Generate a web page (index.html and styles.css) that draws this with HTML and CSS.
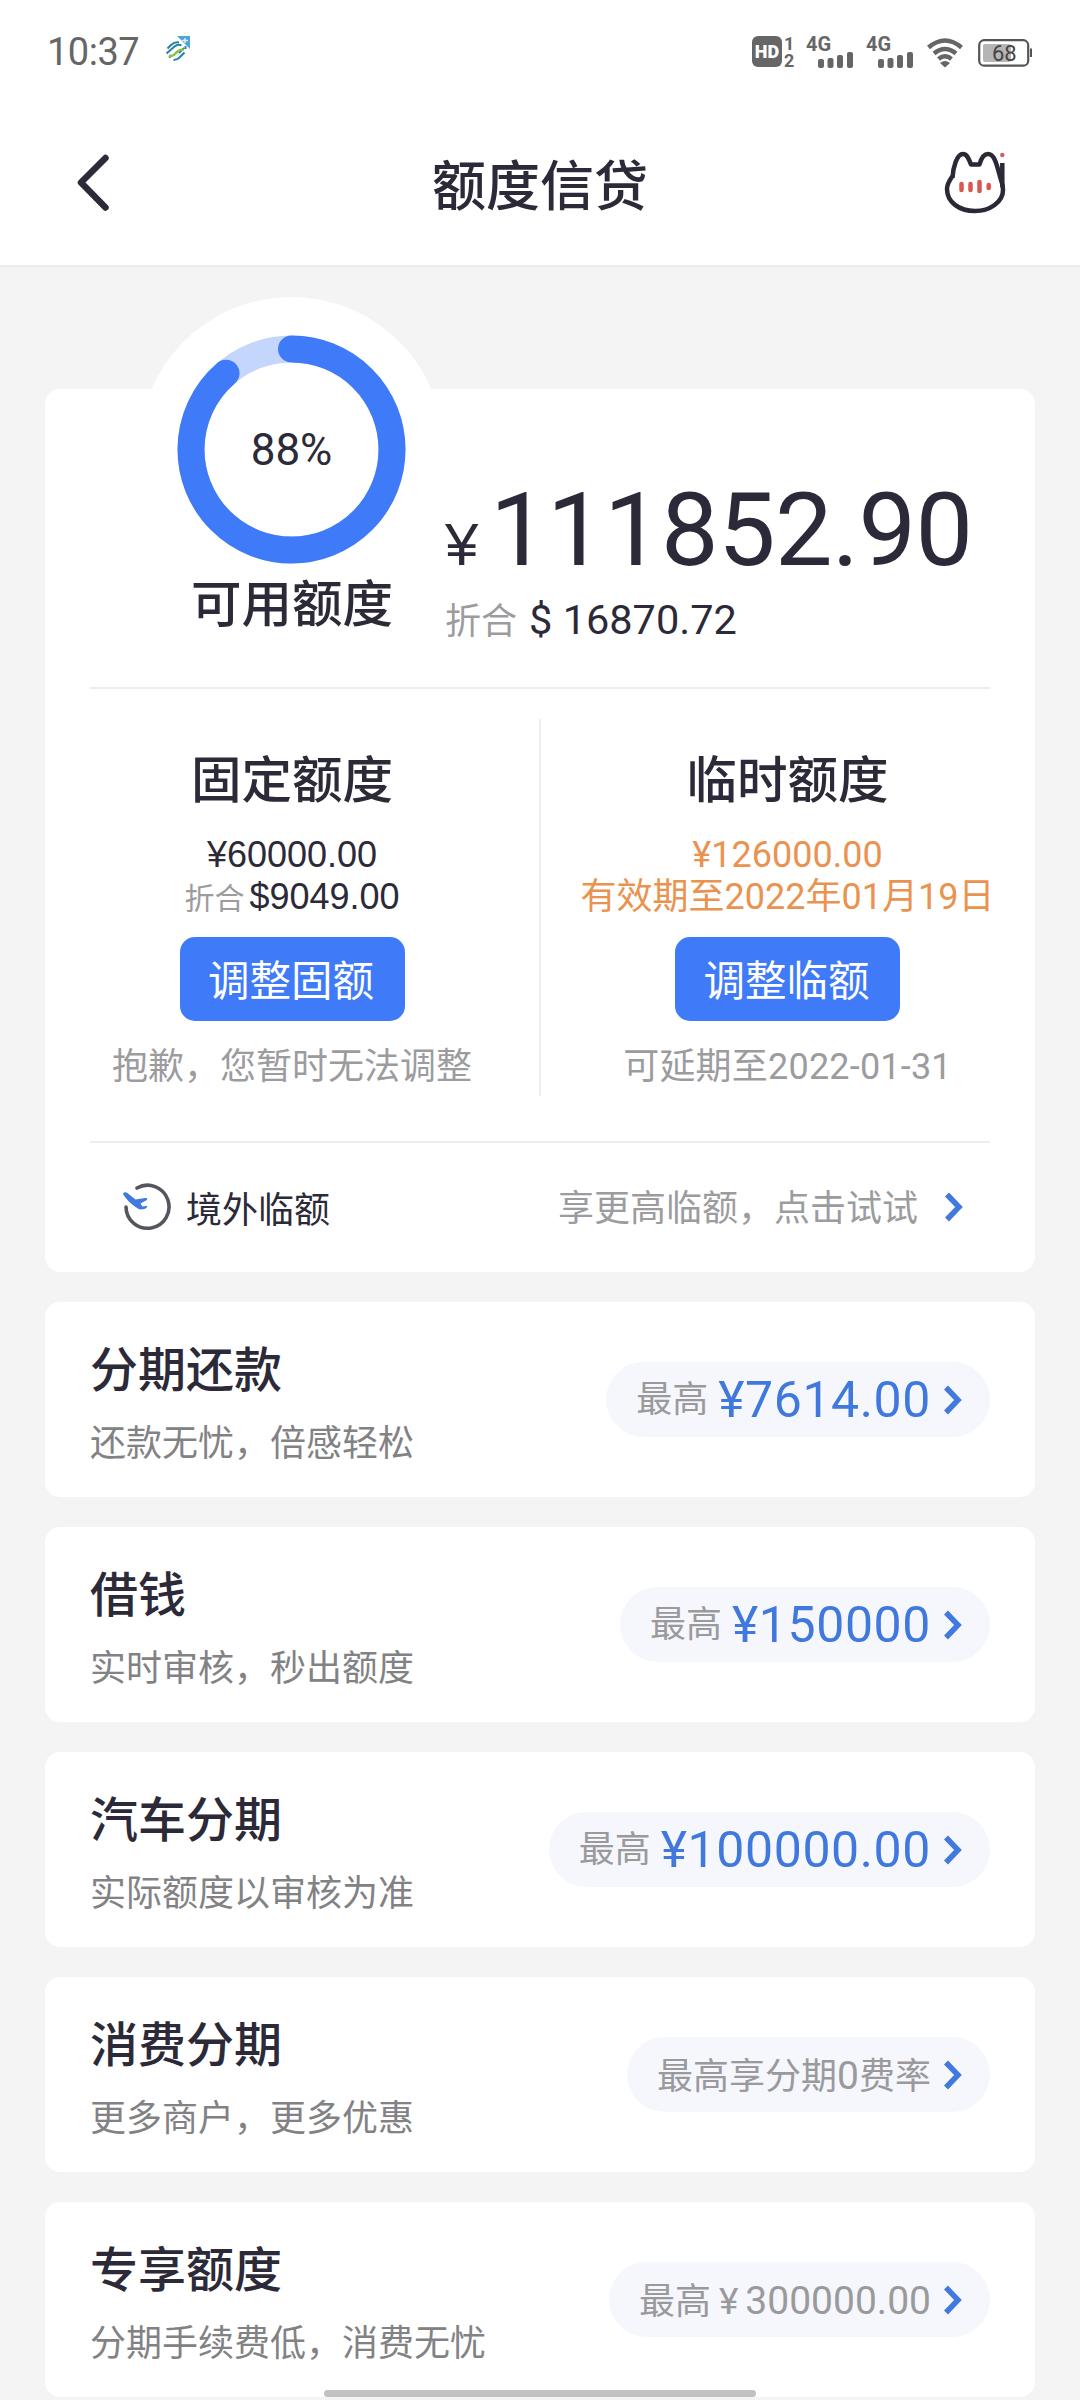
FILE: index.html
```html
<!DOCTYPE html>
<html lang="zh-CN">
<head>
<meta charset="utf-8">
<title>额度信贷</title>
<link rel="stylesheet" href="styles.css">
</head>
<body>
<header class="top">
  <div class="status">
    <span class="time">10:37</span>
    <svg class="app" width="26" height="26" viewBox="0 0 26 26">
      <path class="app-corner" d="M12 0H25V13Z"/>
      <path class="app-plus" d="M17 4.500h6M20 2v5"/>
      <g class="app-logo"><path d="M2.500 12.500 6 9q4-3.500 8-2.500M1.500 17.500l8-7q3.500-3 7-1M4 21.500l3-2M14 17l5-5M8.500 24q3.500 0 6-2.500l5-5M20.500 10v3"/><path class="green" d="M4 19.500q4 1.500 6.500-2t8-4"/></g>
    </svg>
    <span class="grow"></span>
    <span class="hd"><b>HD</b><span class="sims"><i>1</i><i>2</i></span></span>
    <span class="cell c1"><b>4G</b>
      <svg width="36" height="16" viewBox="0 0 36 16"><rect y="7" width="6" height="9" rx="2"/><rect x="9.500" y="6" width="6" height="10" rx="2"/><rect x="19" y="3" width="6" height="13" rx="2"/><rect x="29" width="6" height="16" rx="2"/></svg>
    </span>
    <span class="cell c2"><b>4G</b>
      <svg width="36" height="16" viewBox="0 0 36 16"><rect y="7" width="6" height="9" rx="2"/><rect x="9.500" y="6" width="6" height="10" rx="2"/><rect x="19" y="3" width="6" height="13" rx="2"/><rect x="29" width="6" height="16" rx="2"/></svg>
    </span>
    <svg class="wifi" width="36" height="30" viewBox="0 0 36 30">
      <path d="M1.500 9.500Q18-4.500 34.500 9.500M7 15.500Q18 6.500 29 15.500M11.500 21Q18 15.500 24.500 21"/><path class="dot" d="M13 25Q18 21 23 25L18 29.500Z"/>
    </svg>
    <svg class="battery" width="56" height="28" viewBox="0 0 56 28">
      <rect class="charge" x="5" y="5" width="28" height="18" rx="2"/>
      <rect class="shell" x="1.200" y="1.200" width="49" height="25.500" rx="5"/>
      <path class="nub" d="M53 9.500v8.500"/>
      <text x="14" y="22">68</text>
    </svg>
  </div>
  <nav class="bar">
    <svg class="back" width="36" height="60" viewBox="0 0 36 60"><path d="M31.500 5 7 29.500 31.500 54.500"/></svg>
    <h1>额度信贷</h1>
    <svg class="cat" width="70" height="70" viewBox="940 148 70 70">
      <path d="M952.500 178C953 167 957 154 963 154C967 154 969 159 971 164.500H979.500C981 159 984 154 988 154C995 154 997 166 1001 180C1003 185 1003 188 1003 190C1003 202 990 211 975 211C959 211 947 202 947 189C947 185 949 181 952.500 176"/>
      <path d="M1002.300 163V187"/><circle cx="1002.300" cy="155" r="2.200"/>
      <g class="cheek"><path d="M961.500 184v6M970.500 184v6M979.500 182v9M988.700 185v3"/></g>
    </svg>
  </nav>
</header>
<main>
  <section class="card limit">
    <div class="hero">
      <div class="usage">
        <svg class="ring" width="305" height="305" viewBox="0 0 305 305">
          <circle class="disc" cx="152.500" cy="152.500" r="152.500"/>
          <circle class="track" cx="152.500" cy="152.500" r="100.500"/>
          <circle class="value" cx="152.500" cy="152.500" r="100.500" pathLength="100" stroke-dasharray="88.700 100" transform="rotate(-90 152.500 152.500)"/>
          <text x="152.500" y="167.500" text-anchor="middle">88%</text>
        </svg>
        <h2>可用额度</h2>
      </div>
      <div class="total">
        <div class="sum"><span class="yen">¥</span><span class="big">111852.90</span></div>
        <div class="usd"><span class="muted">折合</span><span>$ 16870.72</span></div>
      </div>
    </div>
    <div class="split">
      <div class="col">
        <h2>固定额度</h2>
        <p class="line">¥60000.00</p>
        <p class="line"><span class="muted small">折合</span>$9049.00</p>
        <button>调整固额</button>
        <p class="line hint">抱歉，您暂时无法调整</p>
      </div>
      <div class="rule"></div>
      <div class="col">
        <h2>临时额度</h2>
        <p class="line orange">¥126000.00</p>
        <p class="line orange">有效期至2022年01月19日</p>
        <button>调整临额</button>
        <p class="line hint date">可延期至2022-01-31</p>
      </div>
    </div>
    <div class="abroad">
      <svg width="50" height="50" viewBox="122 1182 50 50">
        <path class="orbit" d="M137 1188A21.500 21.500 0 1 1 126 1207"/>
        <path class="plane" d="M123.300 1194.500C122.500 1192 126 1191.500 128 1193.500L135.500 1199.500L145 1198C147.500 1197.800 148 1199.500 146 1200.500L140.500 1203.500L142.500 1206.500L146 1206C148.500 1206 147 1208.500 144 1209L140 1209.500C136 1208 128 1202 123.300 1194.500Z"/>
      </svg>
      <span class="name">境外临额</span>
      <span class="grow"></span>
      <span class="tip">享更高临额，点击试试</span>
      <svg class="chev" width="20" height="32" viewBox="0 0 20 32"><path d="M3 3.500 15 16 3 28.500"/></svg>
    </div>
  </section>
  <section class="card item">
    <div><h3>分期还款</h3><p>还款无忧，倍感轻松</p></div>
    <div class="pill">最高<b>¥7614.00</b><svg class="chev" width="20" height="32" viewBox="0 0 20 32"><path d="M3 3.500 15 16 3 28.500"/></svg></div>
  </section>
  <section class="card item">
    <div><h3>借钱</h3><p>实时审核，秒出额度</p></div>
    <div class="pill">最高<b>¥150000</b><svg class="chev" width="20" height="32" viewBox="0 0 20 32"><path d="M3 3.500 15 16 3 28.500"/></svg></div>
  </section>
  <section class="card item">
    <div><h3>汽车分期</h3><p>实际额度以审核为准</p></div>
    <div class="pill">最高<b>¥100000.00</b><svg class="chev" width="20" height="32" viewBox="0 0 20 32"><path d="M3 3.500 15 16 3 28.500"/></svg></div>
  </section>
  <section class="card item">
    <div><h3>消费分期</h3><p>更多商户，更多优惠</p></div>
    <div class="pill"><span class="plain">最高享分期<i>0</i>费率</span><svg class="chev" width="20" height="32" viewBox="0 0 20 32"><path d="M3 3.500 15 16 3 28.500"/></svg></div>
  </section>
  <section class="card item">
    <div><h3>专享额度</h3><p>分期手续费低，消费无忧</p></div>
    <div class="pill"><span class="plain">最高<i class="cny">¥</i><i>300000.00</i></span><svg class="chev" width="20" height="32" viewBox="0 0 20 32"><path d="M3 3.500 15 16 3 28.500"/></svg></div>
  </section>
</main>
<div class="home"></div>
</body>
</html>
```
FILE: styles.css
```css
* { box-sizing: border-box; margin: 0; padding: 0; }
body { width: 1080px; height: 2400px; overflow: hidden; background: #f4f4f4; color: #2c2a38; font-family: "Noto Sans CJK SC", sans-serif; font-kerning: none; }
svg { display: block; flex: none; }
.grow { flex: 1; }
h1, h2, h3 { font-weight: 500; }
.top { height: 267px; background: #fff; border-bottom: 2px solid #ececec; }
.status { height: 104px; display: flex; align-items: flex-start; padding: 36px 46px 0 47px; fill: #666; color: #666; font-family: Roboto, sans-serif; }
.time { font-size: 38px; line-height: 32px; width: 92px; margin-right: 26px; letter-spacing: -.5px; }
.app-corner { fill: #4ea3d8; }
.app-plus { stroke: #d9f0fb; stroke-width: 1.5; fill: none; }
.app-logo { fill: none; stroke: #2683a4; stroke-width: 2; }
.app-logo .green { stroke: #8cc043; stroke-width: 2.500; }
.hd { display: flex; gap: 2px; width: 44px; }
.hd b { width: 30px; height: 31px; border-radius: 6px; background: #666; color: #fff; font-size: 18px; line-height: 31px; text-align: center; font-weight: 900; }
.sims { display: flex; flex-direction: column; }
.sims i { font: 700 18px/17px Roboto, sans-serif; height: 17px; margin-top: -1px; }
.sims i:last-child { margin-top: 0; }
.cell { width: 48px; display: flex; flex-direction: column; }
.cell b { font-size: 20px; line-height: 20px; height: 16px; margin-top: -2px; margin-bottom: 2px; }
.cell svg { margin-left: 12px; }
.c1 { margin-left: 10px; }
.c2 { margin-left: 12px; }
.wifi { margin: 2px 15px 0 13px; fill: none; stroke: #666; stroke-width: 4.500; }
.wifi .dot { fill: #666; stroke: none; }
.battery { margin-top: 3px; overflow: visible; }
.charge { fill: #b5b5b5; }
.shell { fill: none; stroke: #555; stroke-width: 2.200; }
.nub { stroke: #555; stroke-width: 2; }
.battery text { font: 22px Roboto, sans-serif; fill: #444; }
.bar { height: 161px; display: grid; grid-template-columns: 70px 1fr 70px; align-items: center; padding: 0 70px 4px 74px; }
.bar h1 { font-size: 54px; line-height: 64px; text-align: center; margin-right: 4px; }
.back path { fill: none; stroke: #2c2a38; stroke-width: 6.500; stroke-linecap: round; stroke-linejoin: round; }
.cat { fill: none; stroke: #2a2936; stroke-width: 4.500; stroke-linejoin: round; }
.cat circle { fill: #cf5f62; stroke: none; }
.cheek { stroke: #d9574f; stroke-linecap: round; }

main { padding: 122px 45px 0; display: flex; flex-direction: column; gap: 30px; }
.card { background: #fff; border-radius: 15px; }
.limit { height: 883px; }
.hero { height: 300px; margin: 0 45px; display: flex; border-bottom: 2px solid #ededed; }
.usage { width: 306px; margin-left: 49px; text-align: center; }
.ring { margin-top: -92px; }
.disc { fill: #fff; }
.track { fill: none; stroke: #c5d6fc; stroke-width: 27; }
.value { fill: none; stroke: #3f7af8; stroke-width: 27; stroke-linecap: round; }
.ring text { font: 44px Roboto, sans-serif; fill: #2c2a38; }
h2 { font-size: 50.500px; line-height: 60px; }
.usage h2 { position: relative; margin-top: -32px; }
.total { padding-top: 89px; font-family: Roboto, "Noto Sans CJK SC", sans-serif; white-space: nowrap; }
.sum { height: 104px; display: flex; align-items: baseline; line-height: 104px; }
.yen { font: 60px/104px "Liberation Sans", sans-serif; width: 45px; }
.big { font-size: 102.500px; letter-spacing: -.6px; }
.usd { margin-top: 14px; display: flex; align-items: baseline; font-size: 41.500px; line-height: 48px; }
.muted { color: #9c9c9e; }
.usd .muted { font-size: 36px; margin-right: 12px; }
.split { height: 454px; margin: 0 45px; display: flex; border-bottom: 2px solid #ededed; }
.col { width: 449px; padding-top: 57px; display: flex; flex-direction: column; align-items: center; }
.col:first-child { padding-right: 45px; }
.col:last-child { padding-left: 44px; }
.rule { width: 2px; height: 377px; margin-top: 30px; background: #eee; }
.col h2 { margin-bottom: 28px; }
.line { height: 42px; font: 36px/42px "Liberation Sans", "Noto Sans CJK SC", sans-serif; white-space: nowrap; }
.small { font-size: 30px; margin-right: 5px; line-height: 30px; }
.orange { color: #ea9350; font-family: Roboto, "Noto Sans CJK SC", sans-serif; }
.date { font-family: Roboto, "Noto Sans CJK SC", sans-serif; letter-spacing: .2px; }
button { margin: 19px 0 25px; width: 225px; height: 84px; border: 0; border-radius: 15px; background: #3f7af8; color: #fff; font: 41.500px/60px "Noto Sans CJK SC", sans-serif; padding: 0 2px 2px 0; }
.hint { color: #9c9c9f; }
.abroad { height: 129px; display: flex; align-items: center; padding: 0 71px 2px 77px; font-size: 36px; }
.name { margin-left: 14px; }
.tip { color: #9c9c9f; margin: -3px 26px 0 0; }
.orbit { fill: none; stroke: #55555d; stroke-width: 3.600; stroke-linecap: round; }
.plane { fill: #4179df; }
.chev { fill: none; stroke: #4179df; stroke-width: 5.500; }
.item { height: 195px; padding: 0 45px; display: flex; justify-content: space-between; align-items: center; }
h3 { font-size: 48px; line-height: 58px; margin-top: -1px; }
.item p { font-size: 36px; line-height: 44px; margin-top: 23px; color: #828285; }
.pill { height: 75px; display: flex; align-items: center; padding: 0 27px 0 30px; border-radius: 38px; background: #f5f7fc; font: 36px/50px Roboto, "Noto Sans CJK SC", sans-serif; color: #9a9a9d; }
.pill b { font-weight: 400; font-size: 50px; letter-spacing: .6px; color: #4078de; margin-left: 10px; }
.pill .chev { margin-left: 12px; }
.plain { padding-top: 3px; }
.plain i { font-style: normal; font-size: 39px; }
.plain .cny { font-size: 37px; margin: 0 7px 0 8px; }
.home { position: absolute; left: 324px; top: 2390px; width: 432px; height: 7px; border-radius: 4px; background: #c1c1c1; }
```
